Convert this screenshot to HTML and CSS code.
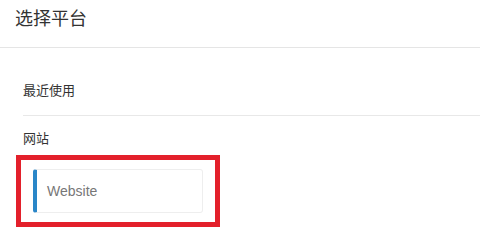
FILE: index.html
```html
<!DOCTYPE html>
<html lang="zh-CN">
<head>
    <meta charset="UTF-8">
    <title>选择平台</title>
    <link rel="stylesheet" href="styles.css">
</head>
<body>
    <div class="header">选择平台</div>
    <div class="content">
        <div class="group recent">最近使用</div>
        <div class="group site">网站</div>
        <div class="highlight">
            <div class="platform-card">Website</div>
        </div>
    </div>
</body>
</html>
```
FILE: styles.css
```css
body {
    margin: 0;
    font-family: "Liberation Sans", "Noto Sans CJK SC", sans-serif;
    color: #333;
    background: #fff;
}
.header {
    height: 47px;
    line-height: 38px;
    padding-left: 15px;
    font-size: 18px;
    color: #333;
    border-bottom: 1px solid #e5e5e5;
}
.content {
    padding-left: 23px;
}
.group {
    font-size: 13px;
    line-height: 20px;
}
.recent {
    padding: 33px 0 14px;
    border-bottom: 1px solid #e8e8e8;
}
.site {
    padding-top: 13px;
}
.highlight {
    width: 170px;
    margin: 6px 0 0 -7px;
    padding: 9px 12px;
    border: 5px solid #e3202b;
}
.platform-card {
    height: 42px;
    line-height: 42px;
    padding-left: 10px;
    font-size: 14px;
    color: #777;
    border: 1px solid #eee;
    border-left: 4px solid #2a86c8;
    border-radius: 3px;
}
```
